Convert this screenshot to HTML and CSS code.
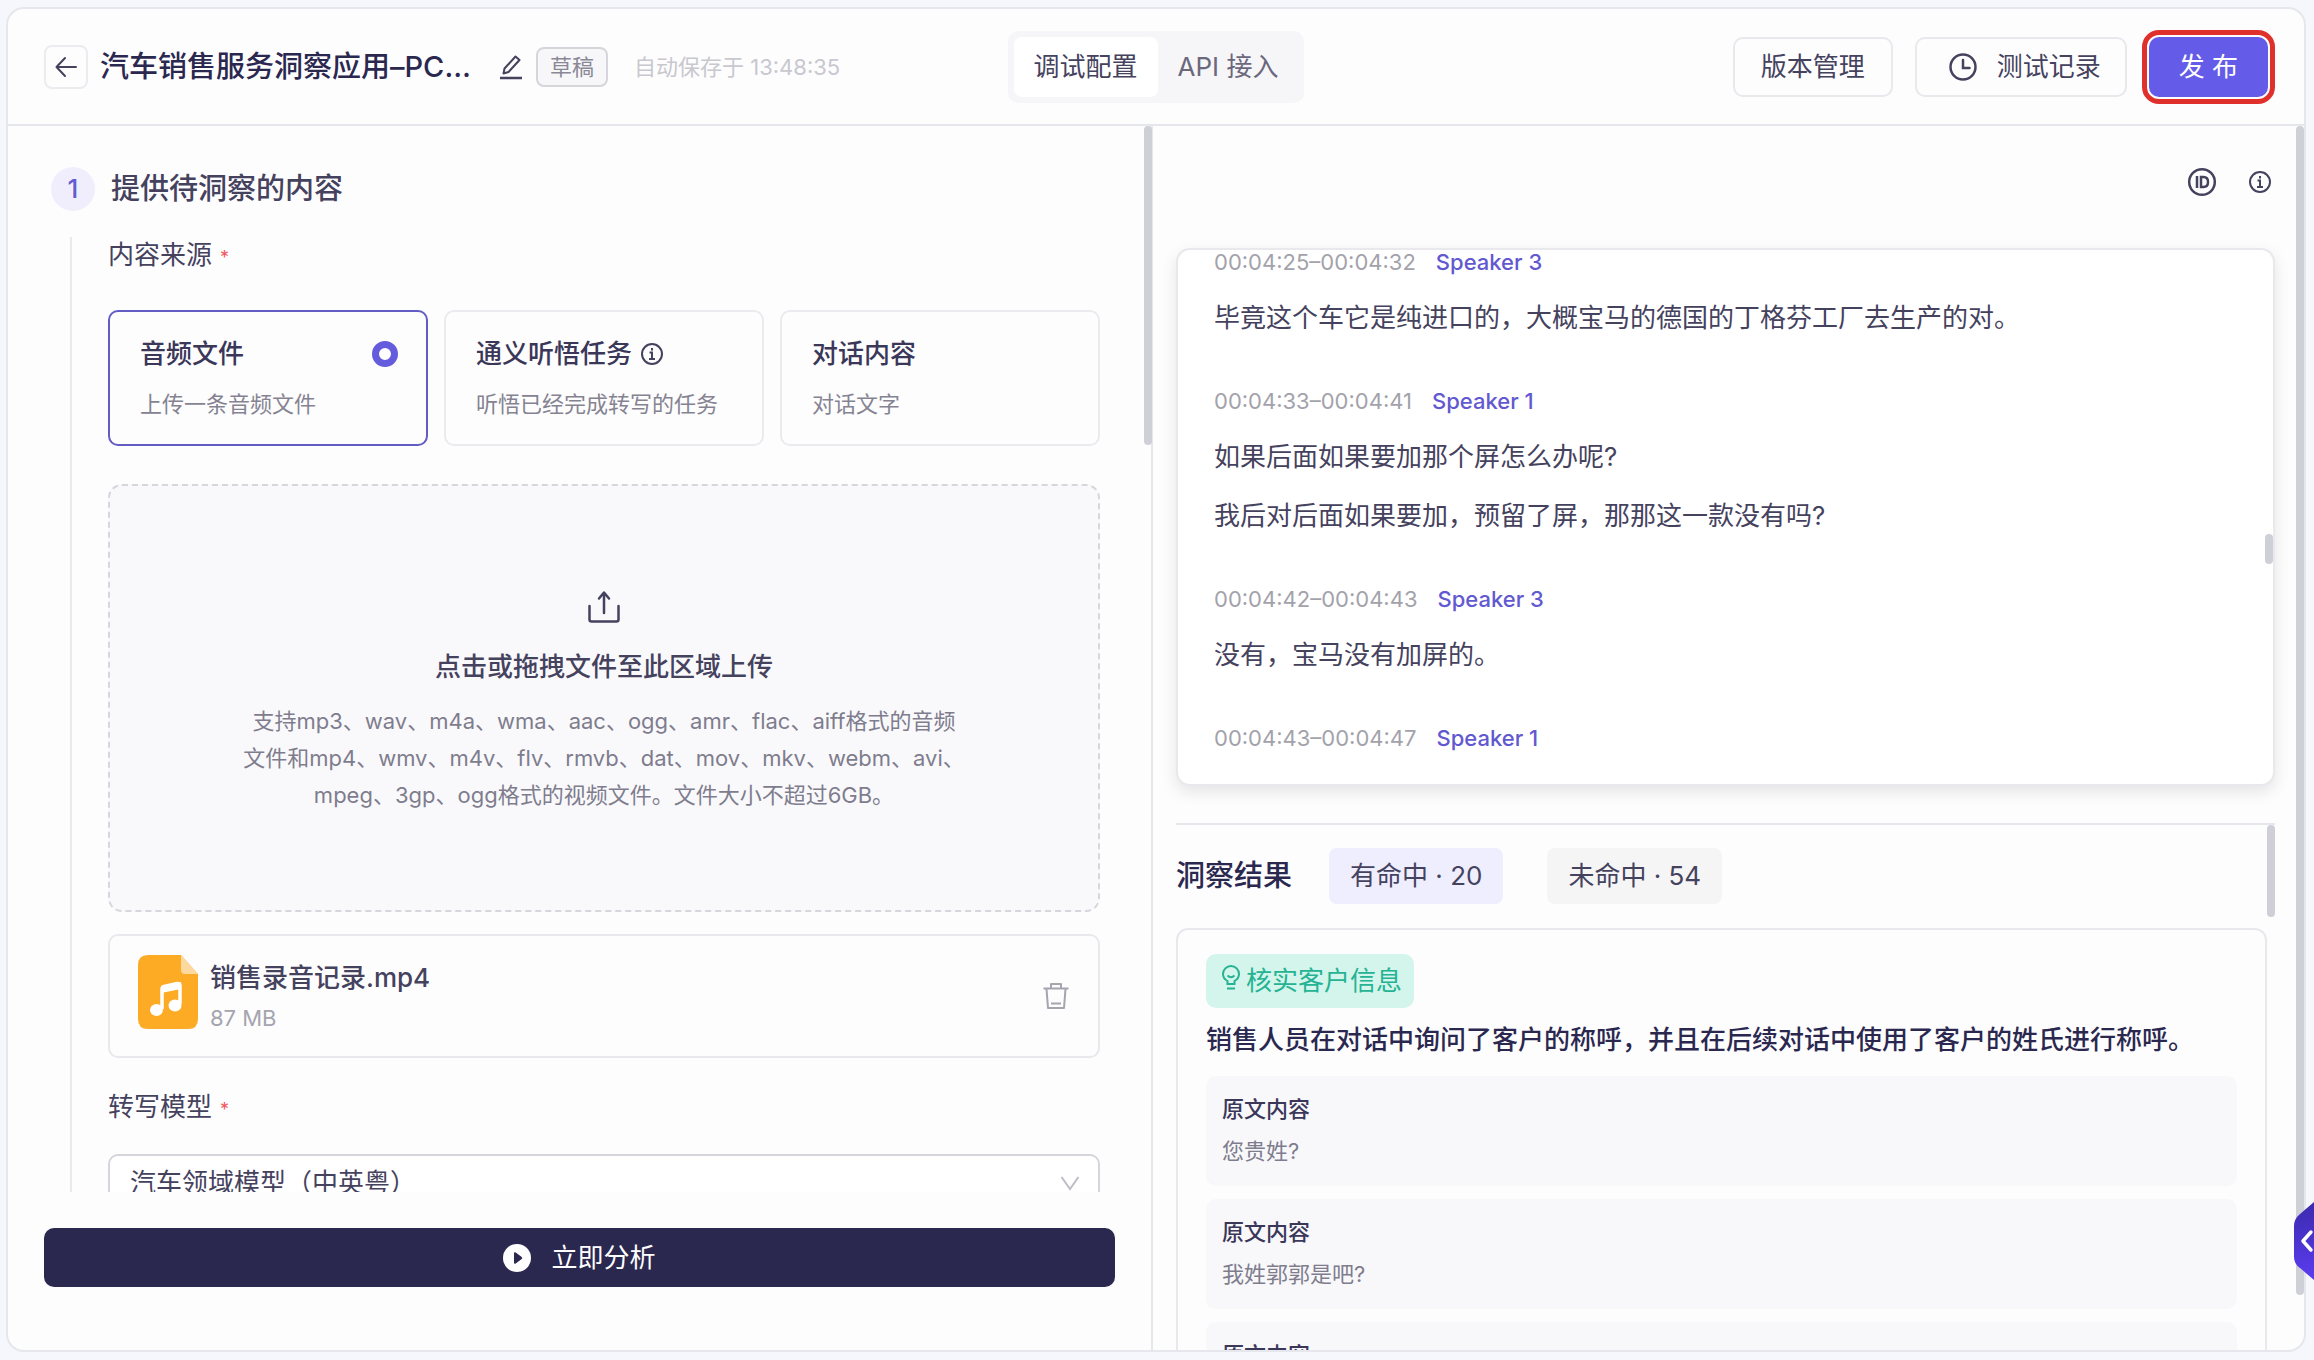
FILE: index.html
```html
<!DOCTYPE html>
<html lang="zh-CN">
<head>
<meta charset="utf-8">
<title>汽车销售服务洞察应用</title>
<link rel="stylesheet" href="styles.css">
</head>
<body>
<div class="app">
  <header class="topbar">
    <div class="topbar-left">
      <button class="back" type="button" aria-label="返回">
        <svg width="24" height="24" viewBox="0 0 24 24" fill="none" stroke="currentColor" stroke-width="2" stroke-linecap="round" stroke-linejoin="round"><path d="M22 12H3M11 3L2.500 12l8.500 9"/></svg>
      </button>
      <h1 class="app-title">汽车销售服务洞察应用–PC…</h1>
      <button class="icon-btn edit" type="button" aria-label="编辑名称">
        <svg width="26" height="26" viewBox="0 0 26 26" fill="none" stroke="currentColor" stroke-width="2" stroke-linejoin="round"><path d="M2 24h22" stroke-width="2.500"/><path d="M17.500 2.500l4 3.500L10.500 18l-5 1.500L6.500 14.500z"/></svg>
      </button>
      <span class="tag">草稿</span>
      <span class="autosave">自动保存于 13:48:35</span>
    </div>
    <nav class="segmented">
      <button class="segment active" type="button">调试配置</button>
      <button class="segment" type="button">API 接入</button>
    </nav>
    <div class="topbar-right">
      <button class="btn" type="button">版本管理</button>
      <button class="btn with-icon" type="button">
        <svg width="28" height="28" viewBox="0 0 28 28" fill="none" stroke="currentColor" stroke-width="2.500" stroke-linecap="round"><circle cx="14" cy="14" r="12.500"/><path d="M14 7v8h6.500"/></svg>
        测试记录
      </button>
      <button class="btn primary" type="button">发 布</button>
    </div>
  </header>

  <main class="panes">
    <section class="pane-left">
      <div class="config">
        <div class="step-head">
          <span class="step-no">1</span>
          <h2 class="step-title">提供待洞察的内容</h2>
        </div>
        <div class="step-body">
          <p class="field-label">内容来源<span class="required">*</span></p>
          <div class="sources">
            <label class="source selected">
              <span class="source-head"><span class="source-name">音频文件</span><input class="source-radio" type="radio" name="source" checked></span>
              <span class="source-desc">上传一条音频文件</span>
            </label>
            <label class="source">
              <span class="source-head"><span class="source-name">通义听悟任务</span>
                <svg width="24" height="24" viewBox="0 0 24 24" fill="none" stroke="currentColor" stroke-width="2"><circle cx="12" cy="12" r="10"/><path d="M9.500 10.500H12V17M9 17h6"/><path d="M12 6v2.500"/></svg>
                <input class="source-radio" type="radio" name="source"></span>
              <span class="source-desc">听悟已经完成转写的任务</span>
            </label>
            <label class="source">
              <span class="source-head"><span class="source-name">对话内容</span><input class="source-radio" type="radio" name="source"></span>
              <span class="source-desc">对话文字</span>
            </label>
          </div>
          <button class="dropzone" type="button">
            <svg width="36" height="36" viewBox="0 0 36 36" fill="none" stroke="currentColor" stroke-width="2.500" stroke-linecap="round" stroke-linejoin="round"><path d="M3.500 17v13.500q0 2 2 2h25q2 0 2-2V17M18 24V4M13 9.500l5-6 5 6"/></svg>
            <span class="drop-title">点击或拖拽文件至此区域上传</span>
            <span class="drop-desc">支持mp3、wav、m4a、wma、aac、ogg、amr、flac、aiff格式的音频<br>文件和mp4、wmv、m4v、flv、rmvb、dat、mov、mkv、webm、avi、<br>mpeg、3gp、ogg格式的视频文件。文件大小不超过6GB。</span>
          </button>
          <div class="file">
            <svg class="file-icon" width="60" height="74" viewBox="0 0 60 74"><path d="M10 0h33l17 19v45q0 10-10 10H10Q0 74 0 64V10Q0 0 10 0z" fill="#fdaa25"/><path d="M43 0l17 19H47q-4 0-4-4z" fill="#fdd9a0"/><path d="M24 54V34q0-2 2-2.500l13-3q3-.5 3 2V49" fill="none" stroke="#fff" stroke-width="3.500"/><path d="M23 32l20-5v7l-20 4z" fill="#fff"/><ellipse cx="18.500" cy="55" rx="6.500" ry="6" fill="#fff"/><ellipse cx="37" cy="50.500" rx="6.500" ry="6" fill="#fff"/></svg>
            <div class="file-text">
              <span class="file-name">销售录音记录.mp4</span>
              <span class="file-size">87 MB</span>
            </div>
            <button class="icon-btn trash" type="button" aria-label="删除">
              <svg width="28" height="28" viewBox="0 0 28 28" fill="none" stroke="currentColor" stroke-width="2" stroke-linejoin="round"><path d="M1.500 6.500h25M9 6V2h10v4M4.500 7l1.500 19h16l1.500-19M9 21.500h10"/></svg>
            </button>
          </div>
          <label class="field-label" for="model">转写模型<span class="required">*</span></label>
          <div class="select-wrap">
            <select class="select" id="model"><option>汽车领域模型（中英粤）</option></select>
            <svg class="select-arrow" width="20" height="16" viewBox="0 0 20 16" fill="none" stroke="currentColor" stroke-width="2"><path d="M1.500 2L10 14l8.500-12"/></svg>
          </div>
        </div>
      </div>
      <div class="run-bar">
        <button class="run" type="button">
          <svg width="28" height="28" viewBox="0 0 28 28"><circle cx="14" cy="14" r="14" fill="#fff"/><path d="M11 9.500q0-2 1.700-1l6 4.500q1.300 1 0 2l-6 4.500q-1.700 1-1.700-1z" fill="#2b2850"/></svg>
          立即分析
        </button>
      </div>
      <span class="thumb thumb-left"></span>
    </section>

    <section class="pane-right">
      <div class="tools">
        <button class="icon-btn" type="button" aria-label="ID">
          <svg width="30" height="30" viewBox="0 0 30 30" fill="none" stroke="currentColor" stroke-width="2.500"><circle cx="15" cy="15" r="12.800"/><path d="M10 9v12M14 10v10h2.500q4.500 0 4.500-5t-4.500-5z"/></svg>
        </button>
        <button class="icon-btn" type="button" aria-label="说明">
          <svg width="24" height="24" viewBox="0 0 24 24" fill="none" stroke="currentColor" stroke-width="2"><circle cx="12" cy="12" r="10"/><path d="M9.500 10.500H12V17M9 17h6"/><path d="M12 6v2.500"/></svg>
        </button>
      </div>

      <div class="transcript">
        <article class="turn">
          <p class="turn-meta">00:04:25–00:04:32<span class="speaker">Speaker 3</span></p>
          <p class="turn-text">毕竟这个车它是纯进口的，大概宝马的德国的丁格芬工厂去生产的对。</p>
        </article>
        <article class="turn">
          <p class="turn-meta">00:04:33–00:04:41<span class="speaker">Speaker 1</span></p>
          <p class="turn-text">如果后面如果要加那个屏怎么办呢?</p>
          <p class="turn-text">我后对后面如果要加，预留了屏，那那这一款没有吗?</p>
        </article>
        <article class="turn">
          <p class="turn-meta">00:04:42–00:04:43<span class="speaker">Speaker 3</span></p>
          <p class="turn-text">没有，宝马没有加屏的。</p>
        </article>
        <article class="turn">
          <p class="turn-meta">00:04:43–00:04:47<span class="speaker">Speaker 1</span></p>
        </article>
        <span class="thumb thumb-transcript"></span>
      </div>

      <div class="results">
        <div class="results-head">
          <h2 class="results-title">洞察结果</h2>
          <button class="chip on" type="button">有命中 · 20</button>
          <button class="chip" type="button">未命中 · 54</button>
        </div>
        <div class="result">
          <span class="result-tag">
            <svg class="bulb" width="18" height="26" viewBox="0 0 18 26" fill="none" stroke="currentColor" stroke-width="2"><path d="M5.500 19v-3Q1 13.500 1 9a8 8 0 0 1 16 0q0 4.500-4.500 7v3zM5 23.500h8"/><path d="M5.500 10.500q3.500 3.500 7 0"/></svg>
            核实客户信息
          </span>
          <h3 class="result-title">销售人员在对话中询问了客户的称呼，并且在后续对话中使用了客户的姓氏进行称呼。</h3>
          <blockquote class="quote"><b class="quote-title">原文内容</b><p class="quote-text">您贵姓?</p></blockquote>
          <blockquote class="quote"><b class="quote-title">原文内容</b><p class="quote-text">我姓郭郭是吧?</p></blockquote>
          <blockquote class="quote"><b class="quote-title">原文内容</b><p class="quote-text"></p></blockquote>
        </div>
        <span class="thumb thumb-results"></span>
      </div>
      <span class="thumb thumb-right"></span>
    </section>
  </main>
</div>
<button class="drawer" type="button" aria-label="展开">
  <svg width="20" height="78" viewBox="0 0 20 78"><defs><linearGradient id="drawer-fill" x1="0" y1="0" x2="0" y2="1"><stop offset="0" stop-color="#3c2aae"/><stop offset="1" stop-color="#5b3cf0"/></linearGradient></defs><path d="M20 0L6 12Q0 17 0 24v31q0 7 6 11l14 12z" fill="url(#drawer-fill)"/><path d="M17 30l-8 9 8 9" fill="none" stroke="#fff" stroke-width="3.500" stroke-linecap="round" stroke-linejoin="round"/></svg>
</button>
</body>
</html>
```
FILE: styles.css
```css
* { box-sizing: border-box; }

body {
  margin: 0;
  height: 100vh;
  padding: 7px 8px 8px 6px;
  background: #f6f7fc;
  color: #45425e;
  font: 26px/36px Inter, "Noto Sans CJK SC", sans-serif;
  overflow: hidden;
}

h1, h2, h3, p, blockquote { margin: 0; }

button, select, input { font: inherit; color: inherit; margin: 0; }

button {
  display: flex;
  align-items: center;
  justify-content: center;
  border: 0;
  background: none;
  padding: 0;
  cursor: pointer;
}

svg { display: block; flex: none; }

.app {
  display: flex;
  flex-direction: column;
  height: 100%;
  background: #fdfdfe;
  border: 2px solid #e6e7ec;
  border-radius: 18px;
  overflow: hidden;
}

/* top bar */
.topbar {
  display: grid;
  grid-template-columns: 1fr auto 1fr;
  align-items: center;
  height: 117px;
  flex: none;
  padding: 0 36px;
  border-bottom: 2px solid #e6e7ec;
}

.topbar-left { display: flex; align-items: center; white-space: nowrap; }

.back {
  width: 44px;
  height: 44px;
  border: 2px solid #ececf0;
  border-radius: 8px;
  color: #45425e;
}

.app-title {
  margin-left: 12px;
  width: 382px;
  font-size: 29px;
  font-weight: 500;
  color: #2b2850;
}

.icon-btn { color: #45425e; }
.edit { margin-left: 16px; }

.tag {
  margin-left: 12px;
  padding: 0 12px;
  border: 2px solid #d5d5db;
  border-radius: 8px;
  background: #f7f7fa;
  color: #8a8896;
  font-size: 22px;
}

.autosave { margin-left: 26px; font-size: 22px; color: #c8c8cf; }

.segmented { display: flex; padding: 6px; border-radius: 10px; background: #f6f6f9; }

.segment { height: 60px; padding: 0 20px; border-radius: 8px; color: #6b687c; }
.segment.active { background: #fff; color: #45425e; }

.topbar-right { display: flex; justify-content: flex-end; gap: 22px; }

.btn {
  gap: 20px;
  height: 60px;
  padding: 0 26px;
  border: 2px solid #e8e8ed;
  border-radius: 10px;
  white-space: nowrap;
}
.btn.with-icon { padding: 0 24px 0 32px; }
.btn.primary {
  border: 0;
  padding: 0 30px;
  background: #645ce8;
  color: #fff;
  outline: 5px solid #e0302c;
  outline-offset: 2px;
}

/* panes */
.panes { display: grid; grid-template-columns: 1146fr 1152fr; flex: 1; min-height: 0; }

.pane-left {
  position: relative;
  display: flex;
  flex-direction: column;
  min-height: 0;
  border-right: 2px solid #e6e7ec;
}

.config { flex: 1; min-height: 0; overflow: hidden; padding: 41px 51px 0 43px; }

.step-head { display: flex; align-items: center; gap: 16px; }

.step-no {
  width: 44px;
  height: 44px;
  border-radius: 50%;
  background: #f0eefd;
  color: #645ccf;
  font-weight: 500;
  line-height: 44px;
  text-align: center;
}

.step-title { font-size: 29px; font-weight: 500; }

.step-body { margin: 26px 0 0 19px; padding-left: 36px; border-left: 2px solid #e9e9ee; }

.field-label { display: block; }
.required { margin-left: 8px; color: #f0575c; font-size: 18px; }

.sources { display: grid; grid-template-columns: repeat(3, 1fr); gap: 16px; margin-top: 34px; }

.source {
  display: flex;
  flex-direction: column;
  gap: 16px;
  padding: 24px 28px 24px 30px;
  border: 2px solid #ebebef;
  border-radius: 10px;
  cursor: pointer;
}
.source.selected { border-color: #635cc4; }

.source-head { display: flex; align-items: center; gap: 8px; height: 36px; }
.source-name { font-weight: 500; color: #3a3759; }
.source-desc { font-size: 22px; line-height: 32px; color: #858392; }

.source-radio { appearance: none; width: 26px; height: 26px; margin-left: auto; border-radius: 50%; }
.source-radio:checked { border: 7px solid #645cdc; background: #fff; }

.dropzone {
  flex-direction: column;
  width: 100%;
  height: 428px;
  margin-top: 38px;
  padding-top: 6px;
  border: 2px dashed #d6d6dd;
  border-radius: 14px;
  background: #f9f9fc;
}
.drop-title { margin-top: 24px; font-weight: 500; }
.drop-desc { margin-top: 18px; font-size: 22px; line-height: 37px; color: #7f7d8d; }

.file {
  display: flex;
  align-items: center;
  gap: 12px;
  height: 124px;
  margin: 22px 0 31px;
  padding: 0 28px;
  border: 2px solid #e8e8ed;
  border-radius: 10px;
}
.file-icon { margin-bottom: 8px; }
.file-text { display: flex; flex-direction: column; gap: 4px; margin-top: 4px; }
.file-name { font-weight: 500; }
.file-size { font-size: 22px; color: #a5a4af; }
.trash { margin-left: auto; color: #a5a4af; }

.select-wrap { position: relative; margin-top: 26px; }
.select {
  appearance: none;
  display: block;
  width: 100%;
  height: 58px;
  padding: 0 20px;
  border: 2px solid #d5d5db;
  border-radius: 10px;
  background: #fff;
}
.select-arrow { position: absolute; right: 20px; top: 21px; color: #bdbdc6; }

.run-bar { flex: none; padding: 36px 36px 63px; }
.run {
  gap: 20px;
  width: 100%;
  height: 59px;
  border-radius: 10px;
  background: #2b2850;
  color: #fff;
}

/* right pane */
.pane-right { position: relative; display: flex; flex-direction: column; min-height: 0; padding: 0 29px 0 23px; }

.tools { display: flex; justify-content: flex-end; align-items: center; gap: 31px; flex: none; height: 112px; margin-bottom: 10px; padding-right: 3px; }

.transcript {
  position: relative;
  flex: none;
  height: 538px;
  padding: 0 36px;
  border: 2px solid #e8e8ed;
  border-radius: 14px;
  background: #fff;
  box-shadow: 0 6px 16px rgba(0, 0, 0, .1);
}

.turn { margin-bottom: 42px; }
.turn-meta { margin-bottom: 14px; font-size: 22px; line-height: 24px; color: #a3a2ab; }
.turn-text { line-height: 59px; }
.speaker { margin-left: 20px; font-weight: 500; color: #6259d0; }

.results { position: relative; flex: 1; min-height: 0; margin-top: 37px; padding-right: 8px; border-top: 2px solid #e6e7ec; overflow: hidden; }

.results-head { display: flex; align-items: center; padding: 23px 0 24px; }
.results-title { margin-right: 37px; font-size: 29px; font-weight: 500; color: #2b2850; }

.chip { height: 56px; margin-right: 44px; padding: 0 21px; border-radius: 8px; background: #f5f5f6; }
.chip.on { background: #efeefe; }

.result { padding: 24px 28px; border: 2px solid #e8e8ed; border-radius: 12px; }

.result-tag {
  display: inline-flex;
  align-items: center;
  gap: 6px;
  height: 54px;
  padding: 0 12px 0 16px;
  border-radius: 10px;
  background: #d3f5ec;
  color: #25b393;
  vertical-align: top;
}
.bulb { margin-bottom: 6px; }

.result-title { margin: 14px 0 18px; font-size: 26px; font-weight: 500; color: #2b2850; }

.quote { height: 110px; margin-bottom: 13px; padding: 15px 16px; border-radius: 10px; background: #f8f8fb; font-size: 22px; }
.quote-title { display: block; margin-bottom: 6px; font-weight: 500; color: #3a3759; }
.quote-text { color: #7f7d8d; }

/* scroll indicators lie over the pane edges */
.thumb { position: absolute; width: 8px; border-radius: 4px; background: #cfd0d7; }
.thumb-left { top: 0; right: -1px; height: 319px; }
.thumb-right { top: 0; right: 0; height: 1169px; }
.thumb-transcript { top: 284px; right: 0; height: 30px; }
.thumb-results { top: 0; right: 0; height: 92px; }

.drawer { position: fixed; right: 0; bottom: 80px; }
```
